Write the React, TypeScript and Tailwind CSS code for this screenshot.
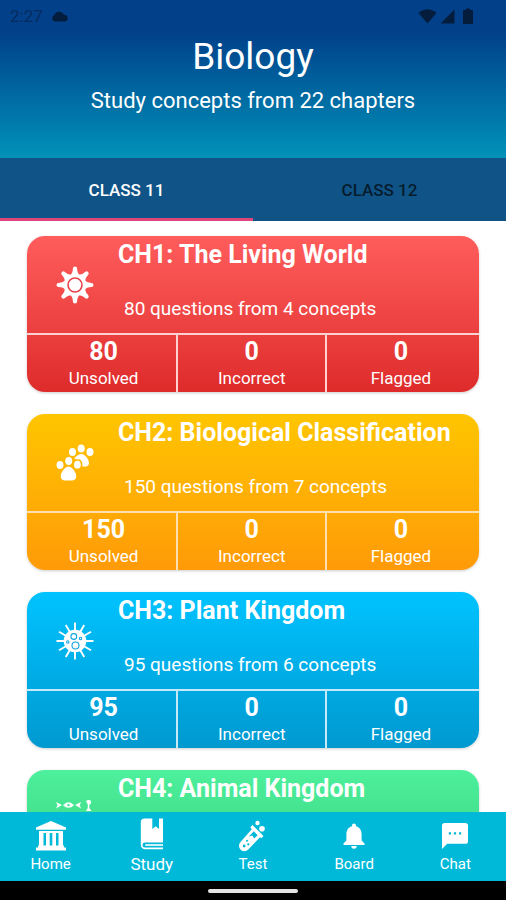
import type { ReactNode } from "react";

type Chapter = {
  title: string;
  summary?: string;
  unsolved?: number;
  gradient: string;
  line: string;
  icon: ReactNode;
};

function SunIcon() {
  return (
    <svg viewBox="0 0 38 38" className="size-[38px]" fill="currentColor" aria-hidden="true">
      {[0, 45, 90, 135, 180, 225, 270, 315].map((angle) => (
        <path
          key={angle}
          d="M13.8 9.5 Q16.8 7.5 16.9 2.6 A2.1 2.1 0 0 1 21.1 2.6 Q21.2 7.5 24.2 9.5 Z"
          transform={`rotate(${angle} 19 19)`}
        />
      ))}
      <circle cx="19" cy="19" r="10.6" />
      <circle cx="19" cy="19" r="7" fill="none" stroke="#e8434a" strokeWidth="1.6" />
    </svg>
  );
}

function PawsIcon() {
  return (
    <svg viewBox="0 0 38 38" className="size-[38px]" fill="currentColor" aria-hidden="true">
      <ellipse cx="16.5" cy="8" rx="3.5" ry="3.9" />
      <ellipse cx="25.2" cy="4.5" rx="3.5" ry="3.9" />
      <ellipse cx="34" cy="8" rx="3.5" ry="3.9" />
      <path d="M18.3 14.6 C20.5 11.6 23 10 25.5 10 C29 10 33 15.5 33 19 C33 22.6 29.5 22.9 26.2 22.4 C27.3 18.5 25.3 15.2 21.8 15.2 C20.3 15.2 19.3 15.6 18.3 14.6 Z" />
      <ellipse cx="4" cy="21" rx="3.5" ry="3.9" />
      <ellipse cx="12.7" cy="17" rx="3.5" ry="3.9" />
      <ellipse cx="21.4" cy="20.7" rx="3.4" ry="3.9" />
      <path d="M12.5 22.5 C9 22.5 4.7 28.5 4.7 32 C4.7 37 9 36.6 12.5 36.6 C16 36.6 20.3 37 20.3 32 C20.3 28.5 16 22.5 12.5 22.5 Z" />
    </svg>
  );
}

function VirusIcon() {
  return (
    <svg viewBox="0 0 38 38" className="size-[38px]" fill="currentColor" aria-hidden="true">
      {[0, 30, 60, 90, 120, 150, 180, 210, 240, 270, 300, 330].map((angle) => (
        <path key={angle} d="M18 9 L18.1 0.5 H19.9 L20 9 Z" transform={`rotate(${angle} 19 19)`} />
      ))}
      <circle cx="19" cy="19" r="11.3" />
      <g fill="none" stroke="#12a5de" strokeWidth="1.1">
        <circle cx="17.8" cy="14.5" r="2.9" />
        <circle cx="19.5" cy="23.5" r="3.5" />
        <circle cx="11.8" cy="20" r="1.2" />
        <circle cx="24.5" cy="16.5" r="1.2" />
      </g>
    </svg>
  );
}

function AnimalsIcon() {
  return (
    <svg viewBox="0 0 38 38" className="size-[38px]" fill="currentColor" aria-hidden="true">
      <path d="M0 2 L6 5 L0 8.5 L1.5 5.2 Z" />
      <path d="M7 5.2 Q12.5 -0.5 18 5.2 Q12.5 10.5 7 5.2 Z M10.8 5.2 L12.5 6.6 L14.2 5.2 L12.5 3.8 Z" fillRule="evenodd" />
      <path d="M19 5 L25 2 L23.8 5.2 L25 8.5 Z" />
      <path d="M30 1 Q33 -1 35 1 Q35.5 4 33.3 5 V8 L35.5 11 H30 L31.8 8 V4.5 Z" />
      <path d="M2 20 Q12 12 23 20 L28 16 V26 L23 22 Q12 30 2 20 Z" />
    </svg>
  );
}

const chapters: Chapter[] = [
  {
    title: "CH1: The Living World",
    summary: "80 questions from 4 concepts",
    unsolved: 80,
    gradient: "bg-linear-to-b from-[#ff5c5c] to-[#de2a2a]",
    line: "border-[#ffd0d0]",
    icon: <SunIcon />,
  },
  {
    title: "CH2: Biological Classification",
    summary: "150 questions from 7 concepts",
    unsolved: 150,
    gradient: "bg-linear-to-b from-[#ffc500] to-[#ff9a08]",
    line: "border-[#ffdfb0]",
    icon: <PawsIcon />,
  },
  {
    title: "CH3: Plant Kingdom",
    summary: "95 questions from 6 concepts",
    unsolved: 95,
    gradient: "bg-linear-to-b from-[#00c3ff] to-[#0099d0]",
    line: "border-[#c4eafa]",
    icon: <VirusIcon />,
  },
  {
    title: "CH4: Animal Kingdom",
    gradient: "bg-linear-to-b from-[#4df09c] to-[#3bd382]",
    line: "border-[#c8f5dc]",
    icon: <AnimalsIcon />,
  },
];

function HomeIcon() {
  return (
    <svg viewBox="0 0 30 30" className="size-[30px]" fill="currentColor" aria-hidden="true">
      <path d="M15 0 L30 6.5 V8.8 H0 V6.5 Z" />
      <path d="M3 10 H27 V12 H3 Z M3 12 H7.5 V25 H3 Z M10 12 H13.7 V25 H10 Z M16.3 12 H20 V25 H16.3 Z M22.5 12 H27 V25 H22.5 Z" />
      <path d="M2 24.5 H28 V26.5 H30 V29.5 H0 V26.5 H2 Z" />
    </svg>
  );
}

function BookIcon() {
  return (
    <svg viewBox="0 0 24 32" className="h-8 w-6" fill="currentColor" aria-hidden="true">
      <path d="M4.5 0.5 H12.3 V11 L15.7 8.3 L19 11 V0.5 H23 V24.5 H5 A2.5 2.5 0 0 0 5 29.5 H23 V31.2 H5 A4.2 4.2 0 0 1 0.8 27 V4.2 A3.7 3.7 0 0 1 4.5 0.5 Z" />
      <path d="M5.2 26.2 H23 V27.8 H5.2 Z" />
    </svg>
  );
}

function TestTubeIcon() {
  return (
    <svg viewBox="0 0 30 32" className="h-8 w-[30px]" fill="currentColor" aria-hidden="true">
      <circle cx="19.5" cy="3" r="2.2" />
      <circle cx="24" cy="8.8" r="2.8" />
      <path
        fillRule="evenodd"
        d="M12.3 7.2 L14.5 5 L25.5 16 L23.3 18.2 L22 17.2 L10.3 29.5 A5.3 5.3 0 0 1 2.5 22 L13.8 9.2 Z M15.8 11.2 L10.8 16.6 L14.3 15.5 L16.3 18.5 L19.6 15.2 Z"
      />
      <g fill="#00b9d8">
        <circle cx="6.2" cy="26" r="1.4" />
        <circle cx="10.3" cy="24.3" r="1.1" />
        <circle cx="9" cy="20.7" r="1" />
      </g>
    </svg>
  );
}

function BellIcon() {
  return (
    <svg viewBox="0 0 22 26" className="h-[26px] w-[22px]" fill="currentColor" aria-hidden="true">
      <path d="M11 0.5 A2 2 0 0 1 13 2.5 V3.2 C17 4.2 18.6 7.5 18.6 11.5 V17.5 L21.5 20.5 V22 H0.5 V20.5 L3.4 17.5 V11.5 C3.4 7.5 5 4.2 9 3.2 V2.5 A2 2 0 0 1 11 0.5 Z M8.3 23 H13.7 A2.7 2.7 0 0 1 8.3 23 Z" />
    </svg>
  );
}

function ChatIcon() {
  return (
    <svg viewBox="0 0 26 26" className="size-[26px]" fill="currentColor" aria-hidden="true">
      <path
        fillRule="evenodd"
        d="M2.6 0 H23.4 A2.6 2.6 0 0 1 26 2.6 V18.2 A2.6 2.6 0 0 1 23.4 20.8 H5.2 L0 26 V2.6 A2.6 2.6 0 0 1 2.6 0 Z M6.8 9.3 V11.5 H9 V9.3 Z M11.9 9.3 V11.5 H14.1 V9.3 Z M17 9.3 V11.5 H19.2 V9.3 Z"
      />
    </svg>
  );
}

const navItems = [
  { label: "Home", icon: <HomeIcon />, active: false },
  { label: "Study", icon: <BookIcon />, active: true },
  { label: "Test", icon: <TestTubeIcon />, active: false },
  { label: "Board", icon: <BellIcon />, active: false },
  { label: "Chat", icon: <ChatIcon />, active: false },
];

function StatusBar() {
  return (
    <div className="flex h-8 items-center justify-between pl-2.5 pr-8 text-[#062b5f]">
      <div className="flex items-center gap-2">
        <span className="text-[17px] leading-5">2:27</span>
        <svg viewBox="0 0 18 11" className="h-[11px] w-[18px] fill-[#041d3c]" aria-hidden="true">
          <path d="M3.5 10.5 A3.4 3.4 0 0 1 3.2 4.2 A5.4 5.4 0 0 1 13 3.7 A3.5 3.5 0 0 1 14.3 10.5 Z" />
        </svg>
      </div>
      <svg viewBox="0 0 56 17" className="h-[17px] w-14 fill-[#041d3c]" aria-hidden="true">
        <path d="M0.5 5 Q9.5 -2.5 18.5 5 L9.5 15.5 Z" />
        <path d="M36.5 1.5 V15.5 H22.5 Z" />
        <path d="M48 0.5 H52 V2 H54 Q55 2 55 3 V15 Q55 16 54 16 H46 Q45 16 45 15 V3 Q45 2 46 2 H48 Z" />
      </svg>
    </div>
  );
}

function Stat({ value, label, line }: { value: number; label: string; line: string }) {
  return (
    <div className={`flex w-[33%] flex-col items-center border-l-2 pt-[3px] first:border-l-transparent first:pl-0.5 ${line}`}>
      <span className="text-[25px] leading-7 font-bold">{value}</span>
      <span className="text-[17px] leading-6">{label}</span>
    </div>
  );
}

function ChapterCard({ chapter }: { chapter: Chapter }) {
  return (
    <article className={`shrink-0 overflow-hidden rounded-[18px] text-white shadow-[0_1px_3px_rgba(0,0,0,0.2)] ${chapter.gradient}`}>
      <div className="flex h-[97px] items-center">
        <div className="flex w-[91px] shrink-0 justify-center pl-1">{chapter.icon}</div>
        <div className="flex h-full min-w-0 flex-col justify-between pt-[5px] pb-3">
          <h2 className="text-[25px] leading-7 font-bold whitespace-nowrap">{chapter.title}</h2>
          {chapter.summary && <p className="pl-1.5 text-[19px] leading-6">{chapter.summary}</p>}
        </div>
      </div>
      {chapter.unsolved !== undefined && (
        <div className={`flex h-[59px] border-t-2 ${chapter.line}`}>
          <Stat value={chapter.unsolved} label="Unsolved" line={chapter.line} />
          <Stat value={0} label="Incorrect" line={chapter.line} />
          <Stat value={0} label="Flagged" line={chapter.line} />
        </div>
      )}
    </article>
  );
}

export default function App() {
  return (
    <div className="flex h-screen flex-col bg-white font-[Roboto,sans-serif]">
      <header className="h-[158px] shrink-0 bg-linear-to-b from-[#03408a] from-20% to-[#0092b8] text-center text-white">
        <StatusBar />
        <h1 className="pt-[3px] text-[37px] leading-11">Biology</h1>
        <p className="pt-1.5 text-[22px] leading-8">Study concepts from 22 chapters</p>
      </header>

      <div role="tablist" className="grid h-[63px] shrink-0 grid-cols-2 bg-[#105487] text-[17px] font-medium">
        <button role="tab" aria-selected="true" className="border-b-3 border-[#e0457b] pt-1.5 text-white">
          CLASS 11
        </button>
        <button role="tab" aria-selected="false" className="border-b-3 border-transparent pt-1.5 text-[#061c2e]">
          CLASS 12
        </button>
      </div>

      <main className="flex min-h-0 flex-1 flex-col gap-[22px] overflow-y-auto px-[27px] pt-[15px] [scrollbar-width:none]">
        {chapters.map((chapter) => (
          <ChapterCard key={chapter.title} chapter={chapter} />
        ))}
      </main>

      <nav className="grid h-[69px] shrink-0 grid-cols-5 bg-[#00b9d8] text-white">
        {navItems.map((item) => (
          <a key={item.label} href="#" className="flex flex-col items-center">
            <span className={item.active ? "flex h-10 items-center pt-1" : "flex h-10 items-center pt-2"}>{item.icon}</span>
            <span className={item.active ? "text-[17px] leading-6" : "text-[15px] leading-6"}>{item.label}</span>
          </a>
        ))}
      </nav>
      <div className="flex h-[19px] shrink-0 items-center justify-center bg-black">
        <div className="h-1 w-[90px] rounded-full bg-[#e4e4e4]" />
      </div>
    </div>
  );
}
